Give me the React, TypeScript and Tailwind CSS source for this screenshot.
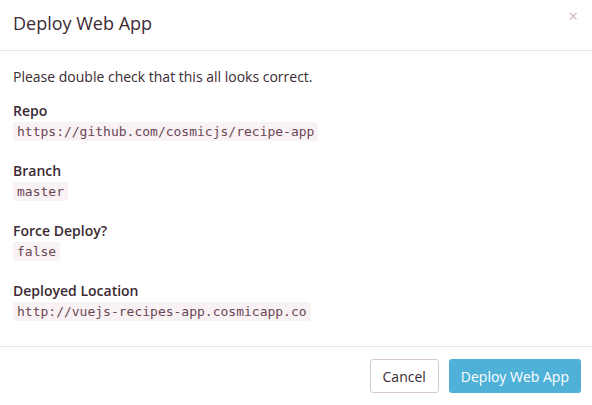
import React from 'react';

const fields = [
  { label: 'Repo', value: 'https://github.com/cosmicjs/recipe-app' },
  { label: 'Branch', value: 'master' },
  { label: 'Force Deploy?', value: 'false' },
  { label: 'Deployed Location', value: 'http://vuejs-recipes-app.cosmicapp.co' },
];

const App: React.FC = () => {
  return (
    <div
      className="w-[592px] h-[405px] bg-white text-[#3b2a33] flex flex-col"
      style={{ fontFamily: '"Open Sans", "Noto Sans", sans-serif' }}
    >
      <div className="h-[51px] shrink-0 border-b border-[#e5e5e5] px-[13px] flex items-center justify-between">
        <h4 className="text-[18px] leading-none -mt-[4px]">Deploy Web App</h4>
        <button className="text-[#c9b3bf] text-[16px] leading-none -mt-[18px] mr-[1px]">×</button>
      </div>

      <div className="px-[13px] pt-[16px] flex-1">
        <p className="text-[14px] leading-[20px] mb-[15px]">Please double check that this all looks correct.</p>
        {fields.map((f) => (
          <div key={f.label} className="mb-[21px]">
            <div className="text-[14px] font-semibold leading-[17px]">{f.label}</div>
            <code
              className="block w-fit mt-[3px] bg-[#f9f2f4] text-[#6b4656] text-[13px] leading-[19px] px-[4px] rounded-[3px]"
              style={{ fontFamily: '"DejaVu Sans Mono", monospace' }}
            >
              {f.value}
            </code>
          </div>
        ))}
      </div>

      <div className="h-[59px] shrink-0 border-t border-[#e5e5e5] px-[11px] flex items-center justify-end gap-[10px]">
        <button className="h-[34px] px-[12px] border border-[#d7c9cf] rounded-[3px] text-[14px] text-[#3b2a33] bg-white">
          Cancel
        </button>
        <button className="h-[34px] px-[12px] rounded-[3px] text-[14px] text-white bg-[#4fb1d7]">
          Deploy Web App
        </button>
      </div>
    </div>
  );
};

export default App;
